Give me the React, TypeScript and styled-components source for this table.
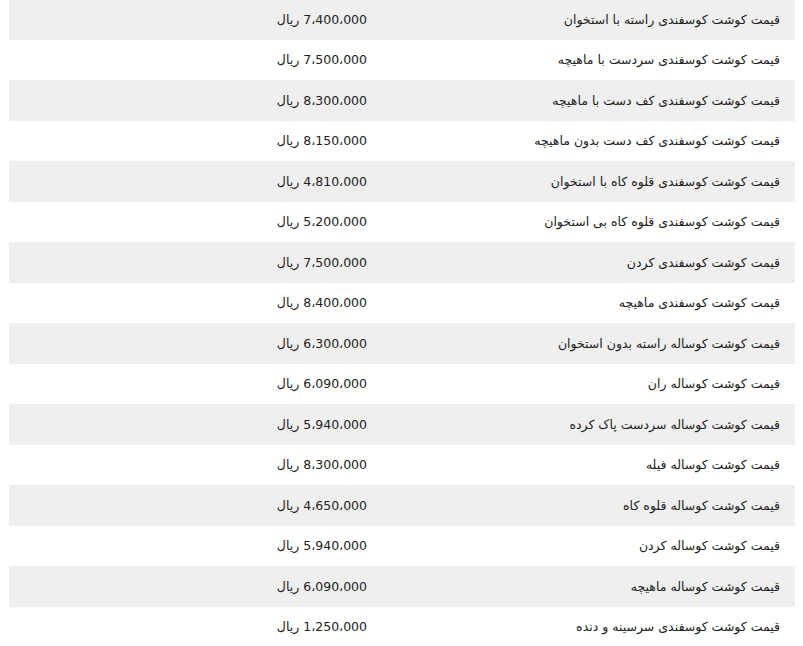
import React from "react";
import styled, { createGlobalStyle } from "styled-components";

const rows: [string, string][] = [
  ["قیمت کوشت کوسفندی راسته با استخوان", "7،400،000"],
  ["قیمت کوشت کوسفندی سردست با ماهیچه", "7،500،000"],
  ["قیمت کوشت کوسفندی کف دست با ماهیچه", "8،300،000"],
  ["قیمت کوشت کوسفندی کف دست بدون ماهیچه", "8،150،000"],
  ["قیمت کوشت کوسفندی قلوه کاه با استخوان", "4،810،000"],
  ["قیمت کوشت کوسفندی قلوه کاه بی استخوان", "5،200،000"],
  ["قیمت کوشت کوسفندی کردن", "7،500،000"],
  ["قیمت کوشت کوسفندی ماهیچه", "8،400،000"],
  ["قیمت کوشت کوساله راسته بدون استخوان", "6،300،000"],
  ["قیمت کوشت کوساله ران", "6،090،000"],
  ["قیمت کوشت کوساله سردست پاک کرده", "5،940،000"],
  ["قیمت کوشت کوساله فیله", "8،300،000"],
  ["قیمت کوشت کوساله قلوه کاه", "4،650،000"],
  ["قیمت کوشت کوساله کردن", "5،940،000"],
  ["قیمت کوشت کوساله ماهیچه", "6،090،000"],
  ["قیمت کوشت کوسفندی سرسینه و دنده", "1،250،000"],
];

const GlobalStyle = createGlobalStyle`
  body {
    margin: 0;
    background: #ffffff;
    font-family: "DejaVu Sans", "Noto Sans", sans-serif;
  }
`;

const Page = styled.div`
  padding: 0 8px 0 9px;
  margin-top: -1px;
`;

const PriceTable = styled.table`
  width: 786px;
  direction: rtl;
  border-collapse: collapse;
  font-size: 12.5px;
  color: #222222;
`;

const Row = styled.tr<{ $shaded: boolean }>`
  height: 40.5px;
  background: ${(p) => (p.$shaded ? "#efefef" : "#ffffff")};
`;

const NameCell = styled.td`
  width: 383px;
  padding: 0 15px;
  text-align: right;
  vertical-align: middle;
`;

const PriceCell = styled.td`
  padding: 0 15px;
  text-align: right;
  vertical-align: middle;
`;

export default function App() {
  return (
    <>
      <GlobalStyle />
      <Page>
        <PriceTable>
          <tbody>
            {rows.map(([name, price], i) => (
              <Row key={i} $shaded={i % 2 === 0}>
                <NameCell>{name}</NameCell>
                <PriceCell>{price} ریال</PriceCell>
              </Row>
            ))}
          </tbody>
        </PriceTable>
      </Page>
    </>
  );
}
